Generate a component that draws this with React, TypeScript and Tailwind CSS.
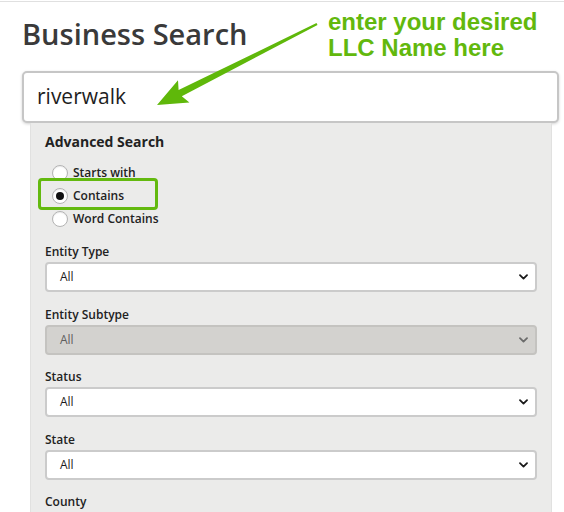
import React from "react";

function Chevron({ muted }: { muted?: boolean }) {
  return (
    <svg width="9" height="6" viewBox="0 0 9 6" className="shrink-0">
      <path
        d="M1 1.2 L4.5 4.6 L8 1.2"
        fill="none"
        stroke={muted ? "#6b6b6b" : "#1a1a1a"}
        strokeWidth="1.8"
        strokeLinecap="round"
        strokeLinejoin="round"
      />
    </svg>
  );
}

function SelectBox({ disabled, hideText }: { disabled?: boolean; hideText?: boolean }) {
  return (
    <div
      className={
        disabled
          ? "h-[30px] rounded-[4px] border-2 border-[#c4c3c0] bg-[#d3d2cf] flex items-center justify-between pl-[13px] pr-[7px]"
          : "h-[30px] rounded-[4px] border-2 border-[#cbcbcb] bg-white flex items-center justify-between pl-[13px] pr-[7px]"
      }
    >
      <span className={disabled ? "text-[12px] text-[#5e5e5e]" : "text-[12px] text-[#1c1c1c]"}>
        {hideText ? "" : "All"}
      </span>
      <Chevron muted={disabled} />
    </div>
  );
}

function Field({ label, disabled, last }: { label: string; disabled?: boolean; last?: boolean }) {
  return (
    <div className="mb-[14.5px]">
      <div className="text-[12px] leading-[16px] font-semibold text-[#222] mb-[2px]">{label}</div>
      <SelectBox disabled={disabled} hideText={last} />
    </div>
  );
}

function Radio({ label, checked }: { label: string; checked?: boolean }) {
  return (
    <div className="h-[23px] flex items-center">
      <span className="ml-[7px] w-[16px] h-[16px] rounded-full border border-[#b3b3b3] bg-white flex items-center justify-center shadow-[inset_0_1px_1px_rgba(0,0,0,0.08)]">
        {checked ? <span className="w-[8px] h-[8px] rounded-full bg-[#111]" /> : null}
      </span>
      <span className="ml-[5px] text-[12px] font-semibold text-[#222]">{label}</span>
    </div>
  );
}

export default function App() {
  return (
    <div className="relative w-[564px] h-[512px] overflow-hidden bg-white font-['Open_Sans',sans-serif]">
      <div className="h-[1px] mt-[1px] bg-[#e0e0e0]" />
      <div className="pl-[22px] pr-[5px]">
        <h1 className="mt-[18px] text-[29px] leading-[28px] font-semibold text-[#3a3a3a]">
          Business Search
        </h1>
        <div className="mt-[23px] h-[52px] rounded-[5px] border-2 border-[#c6c6c6] bg-white shadow-[0_1px_3px_rgba(0,0,0,0.18)] flex items-center pl-[13px]">
          <span className="text-[21px] text-[#1e1e1e]">riverwalk</span>
        </div>
        <div className="ml-[8px] mr-[7px] bg-[#ebebea] border-x border-[#e1e1e0] px-[14px] pt-[9px] h-[400px]">
          <div className="text-[14px] leading-[20px] font-bold text-[#222]">Advanced Search</div>
          <div className="mt-[9px] mb-[14px]">
            <Radio label="Starts with" />
            <Radio label="Contains" checked />
            <Radio label="Word Contains" />
          </div>
          <Field label="Entity Type" />
          <Field label="Entity Subtype" disabled />
          <Field label="Status" />
          <Field label="State" />
          <Field label="County" last />
        </div>
      </div>

      {/* green highlight box */}
      <div className="absolute left-[38px] top-[178px] w-[120px] h-[32px] rounded-[4px] border-[3px] border-[#63b90f]" />

      {/* annotation text */}
      <div className="absolute left-[328px] top-[9px] font-['Liberation_Sans',Arial,sans-serif] font-bold text-[24px] leading-[26px] text-[#62b80d]">
        <div>enter your desired</div>
        <div>LLC Name here</div>
      </div>

      {/* arrow */}
      <svg className="absolute left-0 top-0 pointer-events-none" width="564" height="512" viewBox="0 0 564 512">
        <polygon
          points="157,105 178,80.3 178.6,90.1 316.5,23.1 317.5,24.9 181.8,96.3 189.4,102.5"
          fill="#5fb80a"
        />
      </svg>
    </div>
  );
}
